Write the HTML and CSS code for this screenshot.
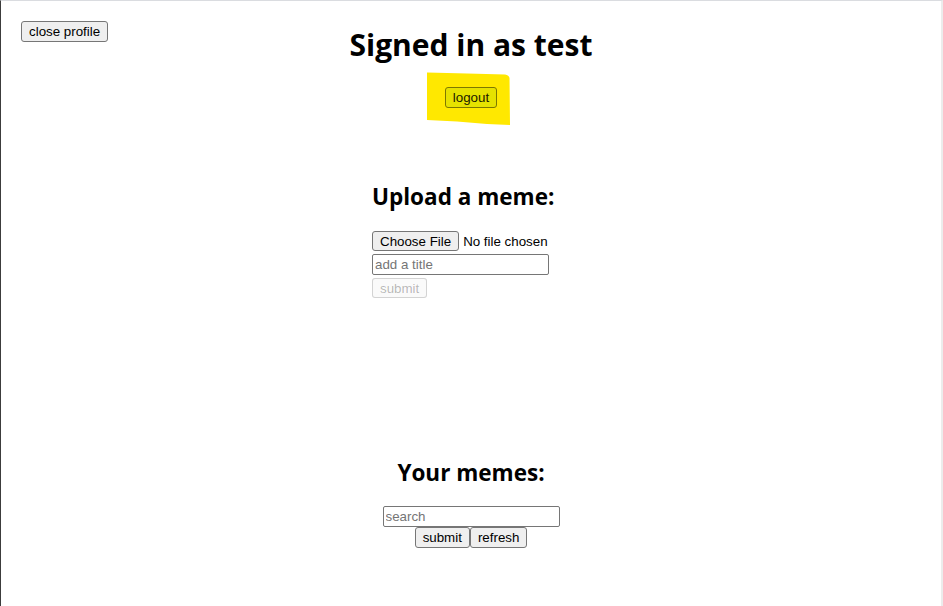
FILE: index.html
```html
<!DOCTYPE html>
<html lang="en">
<head>
<meta charset="utf-8">
<title>Profile</title>
<link rel="stylesheet" href="styles.css">
</head>
<body>
<div class="frame">
  <header class="top">
    <div class="top-left"><button class="btn">close profile</button></div>
    <div class="top-center">
      <h1 class="title">Signed in as test</h1>
      <div class="logout-wrap">
        <svg class="marker" width="86" height="56" viewBox="0 0 86 56" aria-hidden="true">
          <path d="M0 0.5 L40 1.5 L78 2.5 Q82 3 82.5 6 L83 53 L60 52 L30 49.5 L0 48 Z" fill="#ffe800"/>
        </svg>
        <button class="btn logout">logout</button>
      </div>
    </div>
    <div class="top-right"></div>
  </header>

  <section class="upload">
    <h2 class="subtitle">Upload a meme:</h2>
    <form class="upload-form">
      <input class="file" type="file">
      <input class="field" type="text" placeholder="add a title">
      <button class="btn" type="submit" disabled>submit</button>
    </form>
  </section>

  <section class="memes">
    <h2 class="subtitle">Your memes:</h2>
    <input class="field" type="text" placeholder="search">
    <div class="actions">
      <button class="btn">submit</button><button class="btn">refresh</button>
    </div>
  </section>
</div>
</body>
</html>
```

FILE: styles.css
```css
html, body {
  margin: 0;
  padding: 0;
  background: #ffffff;
}

.frame {
  box-sizing: border-box;
  height: 606px;
  border-top: 1px solid #dadce0;
  border-left: 1px solid #3c3c3c;
  border-right: 2px solid #ececec;
  padding: 20px 20px 0 20px;
  font-family: "Open Sans", "Noto Sans", sans-serif;
  color: #000;
}

.btn {
  box-sizing: border-box;
  height: 21px;
  margin: 0;
  padding: 1px 7px;
  font: 13.333px "Liberation Sans", Arial, sans-serif;
  color: #000;
  background: #efefef;
  border: 1px solid #767676;
  border-radius: 3px;
  cursor: pointer;
}

.btn:disabled {
  height: 20px;
  color: rgba(16, 16, 16, 0.3);
  background: rgba(239, 239, 239, 0.3);
  border-color: rgba(118, 118, 118, 0.3);
  cursor: default;
}

.top {
  display: grid;
  grid-template-columns: 1fr auto 1fr;
  align-items: start;
}

.top-left {
  display: flex;
}

.top-center {
  display: flex;
  flex-direction: column;
  align-items: center;
}

.title {
  margin: 4px 0 0 0;
  font-size: 30px;
  font-weight: 700;
  line-height: 40px;
}

.logout-wrap {
  position: relative;
  margin-top: 22px;
  display: flex;
}

.marker {
  position: absolute;
  left: -18px;
  top: -15px;
}

.logout {
  position: relative;
  background: #e6e200;
  border-color: #7d7800;
  color: #1a1a00;
}

.upload {
  width: 198px;
  margin: 73px auto 0 auto;
}

.subtitle {
  margin: 0;
  font-size: 22.5px;
  font-weight: 700;
  line-height: 31px;
}

.upload-form {
  margin-top: 19px;
  display: flex;
  flex-direction: column;
  align-items: flex-start;
  gap: 3px;
}

.file {
  font: 13.333px "Liberation Sans", Arial, sans-serif;
  color: #000;
  height: 20px;
  margin: 0;
}

.file::file-selector-button {
  box-sizing: border-box;
  height: 20px;
  padding: 1px 7px;
  margin: 0 4px 0 0;
  font: 13.333px "Liberation Sans", Arial, sans-serif;
  color: #000;
  background: #efefef;
  border: 1px solid #767676;
  border-radius: 3px;
}

.field {
  box-sizing: border-box;
  width: 177px;
  height: 21px;
  margin: 0;
  padding: 1px 2px;
  font: 13.333px "Liberation Sans", Arial, sans-serif;
  color: #000;
  background: #fff;
  border: 1px solid #767676;
  border-radius: 2px;
}

.field::placeholder {
  color: #757575;
}

.memes {
  margin-top: 159px;
  display: flex;
  flex-direction: column;
  align-items: center;
}

.memes .field {
  margin-top: 18px;
}

.actions {
  display: flex;
}
```
